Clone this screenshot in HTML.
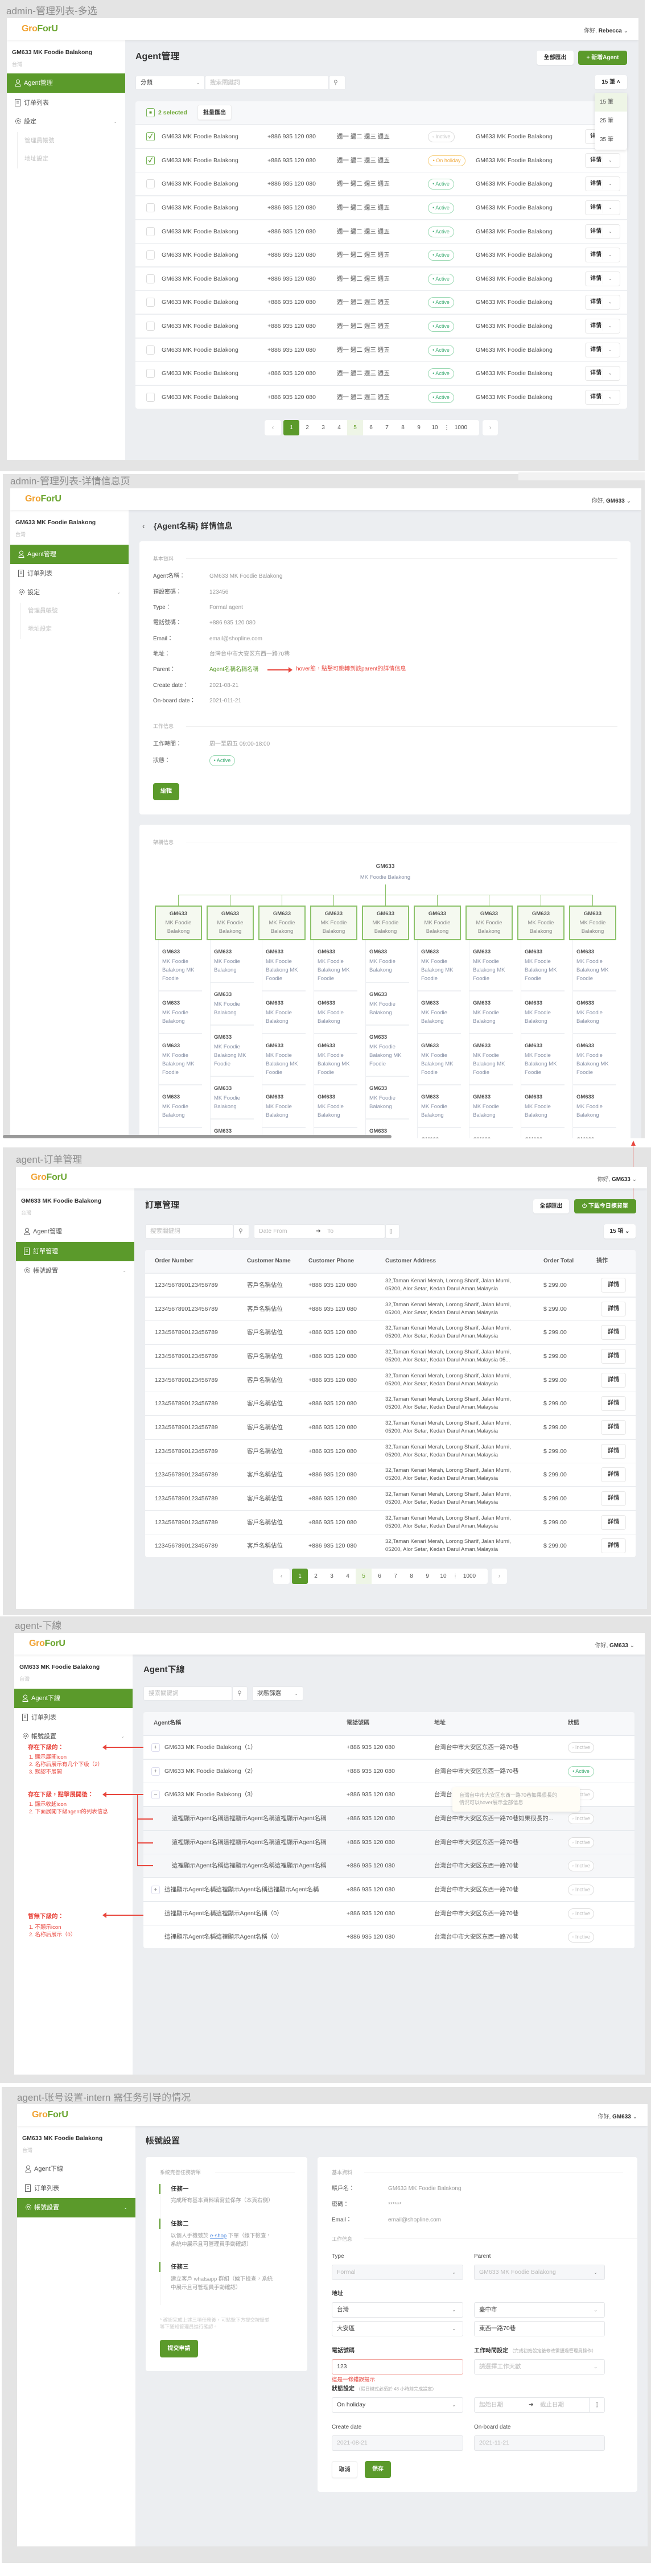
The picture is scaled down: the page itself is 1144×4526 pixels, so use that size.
<!DOCTYPE html>
<html><head><meta charset="utf-8">
<style>
*{margin:0;padding:0;box-sizing:border-box}
body{width:1144px;height:4526px;position:relative;overflow:hidden;background:#fff;font-family:"Liberation Sans","Noto Sans CJK TC","Noto Sans CJK SC",sans-serif;font-size:10.5px;color:#555}
.a{position:absolute}
.t{position:absolute;white-space:nowrap;line-height:14px}
.sec{position:absolute;background:#e4e4e4}
.lbl{position:absolute;font-size:17px;color:#8d8d8d;line-height:20px;white-space:nowrap}
.frame{position:absolute;background:#eceef1;overflow:hidden}
.hdr{position:absolute;left:0;top:0;right:0;height:38px;background:#fff;box-shadow:0 2px 4px rgba(0,0,0,.06);z-index:2}
.logo{position:absolute;left:26px;top:10px;font-size:16px;font-weight:bold;letter-spacing:-.3px}
.logo .g{color:#f1a232}.logo .f{color:#6aa52f}
.hi{position:absolute;right:18px;top:13px;font-size:10px;color:#666}
.hi b{color:#333}
.side{position:absolute;left:0;top:38px;width:208px;bottom:0;background:#fff}
.sname{position:absolute;left:9px;top:16px;font-weight:bold;color:#333;font-size:10.5px;white-space:nowrap}
.sub{position:absolute;left:9px;top:36px;font-size:9px;color:#c4c4c4}
.menu{position:absolute;left:0;width:208px;height:34px;line-height:34px;padding-left:30px;font-size:11px;color:#555}
.menu.on{background:#5b9a2b;color:#fff}
.menu svg{position:absolute;left:14px;top:10px}
.chev{position:absolute;right:14px;font-size:8px;color:#aaa}
.card{position:absolute;background:#fff;border-radius:4px}
.btn{position:absolute;background:#fff;border-radius:4px;font-size:10px;font-weight:bold;color:#333;text-align:center;box-shadow:0 1px 2px rgba(0,0,0,.06)}
.gbtn{position:absolute;background:#5b9a2b;border-radius:4px;color:#fff;font-size:10px;font-weight:bold;text-align:center}
.inp{position:absolute;background:#fff;border:1px solid #e6e8eb;border-radius:3px;font-size:10.5px;color:#bbb;padding-left:8px}
.row{position:absolute;background:#fff;height:40px}
.cb{position:absolute;left:19px;top:12px;width:15px;height:16px;border:1px solid #dcdcdc;border-radius:3px;background:#fff}
.cb.on{border-color:#7ab55c;color:#5b9a2b;font-size:11px;line-height:14px;text-align:center;font-weight:bold}
.pill{position:absolute;height:19px;line-height:17px;border-radius:10px;font-size:9px;text-align:center;border:1px solid #ddd;color:#bbb;background:#fff}
.pill.ac{border-color:#9ad9b3;color:#45b079}
.pill.ho{border-color:#f7cf7e;color:#f0a83a}
.det{position:absolute;width:62px;height:26px;border:1px solid #e8e8e8;border-radius:4px;background:#fff;font-weight:bold;color:#333;font-size:10px;line-height:24px;padding-left:8px}
.det i{position:absolute;left:30px;top:3px;bottom:3px;border-left:1px solid #eee}
.det s{position:absolute;left:40px;text-decoration:none;font-weight:normal;color:#888;font-size:8px}
.pg{position:absolute;height:27px;background:#fff;border-radius:4px;font-size:10px;color:#555;line-height:27px}
.pg span{display:inline-block;width:28px;text-align:center}
.pg .on{background:#5b9a2b;color:#fff;border-radius:3px}
.pg .h{background:#eef5e6;color:#6aa52f}
.sec2l{position:absolute;font-size:9px;color:#aaa}
.line{position:absolute;height:1px;background:#f0f0f0}
.fl{position:absolute;font-size:10px;color:#555;white-space:nowrap;line-height:14px}
.fv{position:absolute;font-size:10px;color:#999;white-space:nowrap;line-height:14px}
.box{position:absolute;width:83px;height:61px;border:2px solid #8cc26a;background:#f5f9f0;text-align:center;font-size:9.5px;color:#888;line-height:15px;padding-top:4px}
.box b{color:#555;display:block;line-height:17px}
.col{position:absolute;width:77px;border-left:1px solid #eef0f3}
.it{padding:12px 0 13px 6px;border-bottom:2px solid #eef0f3;font-size:9.5px;color:#8a93a8;line-height:15px}
.it b{display:block;color:#555;line-height:18px}
.th{position:absolute;font-weight:bold;color:#555;font-size:10px;white-space:nowrap;line-height:14px}
.red{color:#e8453c}
.fi{position:absolute;height:27px;border:1px solid #e3e5e8;border-radius:3px;background:#fff;font-size:10.5px;line-height:25px;padding-left:8px;color:#444}
.fi.d{background:#f6f7f9;color:#bbb}
.fi .c{position:absolute;right:12px;top:0;font-size:8px;color:#888}
</style></head><body>

<!-- ============ SECTION 1 ============ -->
<div class="sec" style="left:0;top:0;width:1133px;height:828px"></div>
<div class="lbl" style="left:11px;top:10px">admin-管理列表-多选</div>
<div class="frame" style="left:12px;top:32px;width:1110px;height:776px">
  <div class="hdr"><div class="logo"><span class="g">Gro</span><span class="f">ForU</span></div><div class="hi">你好, <b>Rebecca</b> ⌄</div></div>
  <div class="side">
    <div class="sname">GM633 MK Foodie Balakong</div><div class="sub">台灣</div>
    <div class="menu on" style="top:59px"><svg width="11" height="13" viewBox="0 0 11 13"><circle cx="5.5" cy="4" r="3" fill="none" stroke="#fff"/><path d="M1 12.5c0-3 2-4.5 4.5-4.5s4.5 1.5 4.5 4.5z" fill="none" stroke="#fff"/></svg>Agent管理</div>
    <div class="menu" style="top:94px"><svg width="10" height="13" viewBox="0 0 10 13"><rect x=".5" y=".5" width="9" height="12" fill="none" stroke="#666"/><path d="M3 4h4M3 7h4" stroke="#666"/></svg>订单列表</div>
    <div class="menu" style="top:127px"><svg width="12" height="12" viewBox="0 0 12 12"><circle cx="6" cy="6" r="4.5" fill="none" stroke="#666" stroke-dasharray="2 1"/><circle cx="6" cy="6" r="1.8" fill="none" stroke="#666"/></svg>設定<span class="chev">⌄</span></div>
    <div class="a" style="left:18px;top:162px;width:1px;height:64px;background:#eee"></div>
    <div class="t" style="left:31px;top:170px;color:#c4c4c4">管理員帳號</div>
    <div class="t" style="left:31px;top:202px;color:#c4c4c4">地址設定</div>
  </div>
</div>
<div class="t" style="left:238px;top:90px;font-size:16px;font-weight:bold;color:#333;line-height:20px">Agent管理</div>
<div class="btn" style="left:943px;top:89px;width:65px;height:25px;line-height:25px">全部匯出</div>
<div class="gbtn" style="left:1016px;top:89px;width:86px;height:25px;line-height:25px">+ 新增Agent</div>
<div class="inp" style="left:238px;top:133px;width:122px;height:25px;line-height:23px;color:#444">分類<span style="position:absolute;right:8px;font-size:8px;color:#888">⌄</span></div>
<div class="inp" style="left:360px;top:133px;width:218px;height:25px;line-height:23px">搜索關鍵詞</div>
<div class="inp" style="left:578px;top:133px;width:29px;height:25px;line-height:23px;color:#888;padding-left:7px">⚲</div>
<div class="btn" style="left:1045px;top:132px;width:57px;height:25px;line-height:25px">15 筆 ˄</div>
<!-- table -->
<div class="card" style="left:238px;top:178px;width:864px;height:542px;background:#eceef1"></div>
<div class="row" style="left:238px;top:178px;width:864px;height:40px;background:#f7f8fa;border-radius:4px 4px 0 0">
  <div class="cb on" style="top:12px;font-size:8px">■</div>
  <div class="t" style="left:40px;top:13px;color:#6aa52f;font-weight:bold">2 selected</div>
  <div class="btn" style="left:109px;top:6px;width:60px;height:27px;line-height:27px;border:1px solid #eee">批量匯出</div>
</div>
<div class="row" style="left:238px;top:220px;width:864px"><div class="cb on">✓</div><div class="t" style="left:46px;top:13px">GM633 MK Foodie Balakong</div><div class="t" style="left:232px;top:13px">+886 935 120 080</div><div class="t" style="left:354px;top:13px">週一 週二 週三 週五</div><div class="pill" style="left:514px;top:11px;width:47px">◦ Inctive</div><div class="t" style="left:598px;top:13px">GM633 MK Foodie Balakong</div><div class="det" style="left:790px;top:7px">详情<i></i><s>⌄</s></div></div>
<div class="row" style="left:238px;top:262px;width:864px"><div class="cb on">✓</div><div class="t" style="left:46px;top:13px">GM633 MK Foodie Balakong</div><div class="t" style="left:232px;top:13px">+886 935 120 080</div><div class="t" style="left:354px;top:13px">週一 週二 週三 週五</div><div class="pill ho" style="left:514px;top:11px;width:66px">• On holiday</div><div class="t" style="left:598px;top:13px">GM633 MK Foodie Balakong</div><div class="det" style="left:790px;top:7px">详情<i></i><s>⌄</s></div></div>
<div class="row" style="left:238px;top:303px;width:864px"><div class="cb"></div><div class="t" style="left:46px;top:13px">GM633 MK Foodie Balakong</div><div class="t" style="left:232px;top:13px">+886 935 120 080</div><div class="t" style="left:354px;top:13px">週一 週二 週三 週五</div><div class="pill ac" style="left:514px;top:11px;width:46px">• Active</div><div class="t" style="left:598px;top:13px">GM633 MK Foodie Balakong</div><div class="det" style="left:790px;top:7px">详情<i></i><s>⌄</s></div></div>
<div class="row" style="left:238px;top:345px;width:864px"><div class="cb"></div><div class="t" style="left:46px;top:13px">GM633 MK Foodie Balakong</div><div class="t" style="left:232px;top:13px">+886 935 120 080</div><div class="t" style="left:354px;top:13px">週一 週二 週三 週五</div><div class="pill ac" style="left:514px;top:11px;width:46px">• Active</div><div class="t" style="left:598px;top:13px">GM633 MK Foodie Balakong</div><div class="det" style="left:790px;top:7px">详情<i></i><s>⌄</s></div></div>
<div class="row" style="left:238px;top:387px;width:864px"><div class="cb"></div><div class="t" style="left:46px;top:13px">GM633 MK Foodie Balakong</div><div class="t" style="left:232px;top:13px">+886 935 120 080</div><div class="t" style="left:354px;top:13px">週一 週二 週三 週五</div><div class="pill ac" style="left:514px;top:11px;width:46px">• Active</div><div class="t" style="left:598px;top:13px">GM633 MK Foodie Balakong</div><div class="det" style="left:790px;top:7px">详情<i></i><s>⌄</s></div></div>
<div class="row" style="left:238px;top:428px;width:864px"><div class="cb"></div><div class="t" style="left:46px;top:13px">GM633 MK Foodie Balakong</div><div class="t" style="left:232px;top:13px">+886 935 120 080</div><div class="t" style="left:354px;top:13px">週一 週二 週三 週五</div><div class="pill ac" style="left:514px;top:11px;width:46px">• Active</div><div class="t" style="left:598px;top:13px">GM633 MK Foodie Balakong</div><div class="det" style="left:790px;top:7px">详情<i></i><s>⌄</s></div></div>
<div class="row" style="left:238px;top:470px;width:864px"><div class="cb"></div><div class="t" style="left:46px;top:13px">GM633 MK Foodie Balakong</div><div class="t" style="left:232px;top:13px">+886 935 120 080</div><div class="t" style="left:354px;top:13px">週一 週二 週三 週五</div><div class="pill ac" style="left:514px;top:11px;width:46px">• Active</div><div class="t" style="left:598px;top:13px">GM633 MK Foodie Balakong</div><div class="det" style="left:790px;top:7px">详情<i></i><s>⌄</s></div></div>
<div class="row" style="left:238px;top:511px;width:864px"><div class="cb"></div><div class="t" style="left:46px;top:13px">GM633 MK Foodie Balakong</div><div class="t" style="left:232px;top:13px">+886 935 120 080</div><div class="t" style="left:354px;top:13px">週一 週二 週三 週五</div><div class="pill ac" style="left:514px;top:11px;width:46px">• Active</div><div class="t" style="left:598px;top:13px">GM633 MK Foodie Balakong</div><div class="det" style="left:790px;top:7px">详情<i></i><s>⌄</s></div></div>
<div class="row" style="left:238px;top:553px;width:864px"><div class="cb"></div><div class="t" style="left:46px;top:13px">GM633 MK Foodie Balakong</div><div class="t" style="left:232px;top:13px">+886 935 120 080</div><div class="t" style="left:354px;top:13px">週一 週二 週三 週五</div><div class="pill ac" style="left:514px;top:11px;width:46px">• Active</div><div class="t" style="left:598px;top:13px">GM633 MK Foodie Balakong</div><div class="det" style="left:790px;top:7px">详情<i></i><s>⌄</s></div></div>
<div class="row" style="left:238px;top:595px;width:864px"><div class="cb"></div><div class="t" style="left:46px;top:13px">GM633 MK Foodie Balakong</div><div class="t" style="left:232px;top:13px">+886 935 120 080</div><div class="t" style="left:354px;top:13px">週一 週二 週三 週五</div><div class="pill ac" style="left:514px;top:11px;width:46px">• Active</div><div class="t" style="left:598px;top:13px">GM633 MK Foodie Balakong</div><div class="det" style="left:790px;top:7px">详情<i></i><s>⌄</s></div></div>
<div class="row" style="left:238px;top:636px;width:864px"><div class="cb"></div><div class="t" style="left:46px;top:13px">GM633 MK Foodie Balakong</div><div class="t" style="left:232px;top:13px">+886 935 120 080</div><div class="t" style="left:354px;top:13px">週一 週二 週三 週五</div><div class="pill ac" style="left:514px;top:11px;width:46px">• Active</div><div class="t" style="left:598px;top:13px">GM633 MK Foodie Balakong</div><div class="det" style="left:790px;top:7px">详情<i></i><s>⌄</s></div></div>
<div class="row" style="left:238px;top:678px;width:864px;border-radius:0 0 4px 4px"><div class="cb"></div><div class="t" style="left:46px;top:13px">GM633 MK Foodie Balakong</div><div class="t" style="left:232px;top:13px">+886 935 120 080</div><div class="t" style="left:354px;top:13px">週一 週二 週三 週五</div><div class="pill ac" style="left:514px;top:11px;width:46px">• Active</div><div class="t" style="left:598px;top:13px">GM633 MK Foodie Balakong</div><div class="det" style="left:790px;top:7px">详情<i></i><s>⌄</s></div></div>
<!-- dropdown -->
<div class="card" style="left:1045px;top:163px;width:57px;height:100px;box-shadow:0 2px 6px rgba(0,0,0,.12);font-size:10px;color:#555">
  <div style="height:33px;line-height:33px;padding-left:9px;background:#eef5e6">15 筆</div>
  <div style="height:33px;line-height:33px;padding-left:9px">25 筆</div>
  <div style="height:33px;line-height:33px;padding-left:9px">35 筆</div>
</div>
<div class="pg" style="left:465px;top:738px;width:29px;text-align:center;color:#999">‹</div>
<div class="pg" style="left:498px;top:738px;width:344px"><span class="on">1</span><span>2</span><span>3</span><span>4</span><span class="h">5</span><span>6</span><span>7</span><span>8</span><span>9</span><span>10</span><span style="width:14px">⋮</span><span style="width:36px">1000</span></div>
<div class="pg" style="left:848px;top:738px;width:27px;text-align:center;color:#999">›</div>

<!-- ============ SECTION 2 ============ -->
<div class="sec" style="left:5px;top:833px;width:1128px;height:1167px"></div>
<div class="a" style="left:911px;top:830px;width:222px;height:14px;background:#f2f2f2"></div>
<div class="lbl" style="left:18px;top:836px">admin-管理列表-详情信息页</div>
<div class="frame" style="left:18px;top:858px;width:1109px;height:1142px">
  <div class="hdr"><div class="logo"><span class="g">Gro</span><span class="f">ForU</span></div><div class="hi">你好, <b>GM633</b> ⌄</div></div>
  <div class="side">
    <div class="sname">GM633 MK Foodie Balakong</div><div class="sub">台灣</div>
    <div class="menu on" style="top:61px"><svg width="11" height="13" viewBox="0 0 11 13"><circle cx="5.5" cy="4" r="3" fill="none" stroke="#fff"/><path d="M1 12.5c0-3 2-4.5 4.5-4.5s4.5 1.5 4.5 4.5z" fill="none" stroke="#fff"/></svg>Agent管理</div>
    <div class="menu" style="top:95px"><svg width="10" height="13" viewBox="0 0 10 13"><rect x=".5" y=".5" width="9" height="12" fill="none" stroke="#666"/><path d="M3 4h4M3 7h4" stroke="#666"/></svg>订单列表</div>
    <div class="menu" style="top:128px"><svg width="12" height="12" viewBox="0 0 12 12"><circle cx="6" cy="6" r="4.5" fill="none" stroke="#666" stroke-dasharray="2 1"/><circle cx="6" cy="6" r="1.8" fill="none" stroke="#666"/></svg>設定<span class="chev">⌄</span></div>
    <div class="a" style="left:18px;top:163px;width:1px;height:64px;background:#eee"></div>
    <div class="t" style="left:31px;top:170px;color:#c4c4c4">管理員帳號</div>
    <div class="t" style="left:31px;top:202px;color:#c4c4c4">地址設定</div>
  </div>
  <!-- tree card -->
  <div class="card" style="left:227px;top:591px;width:863px;height:600px;overflow:hidden">
    <div class="sec2l" style="left:24px;top:24px">架構信息</div><div class="line" style="left:82px;top:30px;width:758px"></div>
    <div class="t" style="left:382px;top:67px;width:100px;text-align:center;font-weight:bold;color:#555;font-size:10px">GM633</div>
    <div class="t" style="left:382px;top:86px;width:100px;text-align:center;color:#8a93a8;font-size:9.5px">MK Foodie Balakong</div>
    <div class="a" style="left:432px;top:105px;width:1px;height:18px;background:#8cc26a"></div>
    <div class="a" style="left:68px;top:123px;width:729px;height:1px;background:#8cc26a"></div>
    <div class="a" style="left:68px;top:123px;width:1px;height:19px;background:#8cc26a"></div>
    <div class="a" style="left:159px;top:123px;width:1px;height:19px;background:#8cc26a"></div>
    <div class="a" style="left:250px;top:123px;width:1px;height:19px;background:#8cc26a"></div>
    <div class="a" style="left:341px;top:123px;width:1px;height:19px;background:#8cc26a"></div>
    <div class="a" style="left:432px;top:123px;width:1px;height:19px;background:#8cc26a"></div>
    <div class="a" style="left:523px;top:123px;width:1px;height:19px;background:#8cc26a"></div>
    <div class="a" style="left:614px;top:123px;width:1px;height:19px;background:#8cc26a"></div>
    <div class="a" style="left:705px;top:123px;width:1px;height:19px;background:#8cc26a"></div>
    <div class="a" style="left:796px;top:123px;width:1px;height:19px;background:#8cc26a"></div>
    <div class="box" style="left:27px;top:142px"><b>GM633</b>MK Foodie<br>Balakong</div>
    <div class="box" style="left:118px;top:142px"><b>GM633</b>MK Foodie<br>Balakong</div>
    <div class="box" style="left:209px;top:142px"><b>GM633</b>MK Foodie<br>Balakong</div>
    <div class="box" style="left:300px;top:142px"><b>GM633</b>MK Foodie<br>Balakong</div>
    <div class="box" style="left:391px;top:142px"><b>GM633</b>MK Foodie<br>Balakong</div>
    <div class="box" style="left:482px;top:142px"><b>GM633</b>MK Foodie<br>Balakong</div>
    <div class="box" style="left:573px;top:142px"><b>GM633</b>MK Foodie<br>Balakong</div>
    <div class="box" style="left:664px;top:142px"><b>GM633</b>MK Foodie<br>Balakong</div>
    <div class="box" style="left:755px;top:142px"><b>GM633</b>MK Foodie<br>Balakong</div>
    <div class="col" style="left:33px;top:203px"><div class="it"><b>GM633</b>MK Foodie<br>Balakong MK<br>Foodie</div><div class="it"><b>GM633</b>MK Foodie<br>Balakong</div><div class="it"><b>GM633</b>MK Foodie<br>Balakong MK<br>Foodie</div><div class="it"><b>GM633</b>MK Foodie<br>Balakong</div><div class="it"><b>GM633</b>MK Foodie<br>Balakong</div></div>
    <div class="col" style="left:124px;top:203px"><div class="it"><b>GM633</b>MK Foodie<br>Balakong</div><div class="it"><b>GM633</b>MK Foodie<br>Balakong</div><div class="it"><b>GM633</b>MK Foodie<br>Balakong MK<br>Foodie</div><div class="it"><b>GM633</b>MK Foodie<br>Balakong</div><div class="it"><b>GM633</b>MK Foodie<br>Balakong</div></div>
    <div class="col" style="left:215px;top:203px"><div class="it"><b>GM633</b>MK Foodie<br>Balakong MK<br>Foodie</div><div class="it"><b>GM633</b>MK Foodie<br>Balakong</div><div class="it"><b>GM633</b>MK Foodie<br>Balakong MK<br>Foodie</div><div class="it"><b>GM633</b>MK Foodie<br>Balakong</div><div class="it"><b>GM633</b>MK Foodie<br>Balakong</div></div>
    <div class="col" style="left:306px;top:203px"><div class="it"><b>GM633</b>MK Foodie<br>Balakong MK<br>Foodie</div><div class="it"><b>GM633</b>MK Foodie<br>Balakong</div><div class="it"><b>GM633</b>MK Foodie<br>Balakong MK<br>Foodie</div><div class="it"><b>GM633</b>MK Foodie<br>Balakong</div><div class="it"><b>GM633</b>MK Foodie<br>Balakong</div></div>
    <div class="col" style="left:397px;top:203px"><div class="it"><b>GM633</b>MK Foodie<br>Balakong</div><div class="it"><b>GM633</b>MK Foodie<br>Balakong</div><div class="it"><b>GM633</b>MK Foodie<br>Balakong MK<br>Foodie</div><div class="it"><b>GM633</b>MK Foodie<br>Balakong</div><div class="it"><b>GM633</b>MK Foodie<br>Balakong</div></div>
    <div class="col" style="left:488px;top:203px"><div class="it"><b>GM633</b>MK Foodie<br>Balakong MK<br>Foodie</div><div class="it"><b>GM633</b>MK Foodie<br>Balakong</div><div class="it"><b>GM633</b>MK Foodie<br>Balakong MK<br>Foodie</div><div class="it"><b>GM633</b>MK Foodie<br>Balakong</div><div class="it"><b>GM633</b>MK Foodie<br>Balakong</div></div>
    <div class="col" style="left:579px;top:203px"><div class="it"><b>GM633</b>MK Foodie<br>Balakong MK<br>Foodie</div><div class="it"><b>GM633</b>MK Foodie<br>Balakong</div><div class="it"><b>GM633</b>MK Foodie<br>Balakong MK<br>Foodie</div><div class="it"><b>GM633</b>MK Foodie<br>Balakong</div><div class="it"><b>GM633</b>MK Foodie<br>Balakong</div></div>
    <div class="col" style="left:670px;top:203px"><div class="it"><b>GM633</b>MK Foodie<br>Balakong MK<br>Foodie</div><div class="it"><b>GM633</b>MK Foodie<br>Balakong</div><div class="it"><b>GM633</b>MK Foodie<br>Balakong MK<br>Foodie</div><div class="it"><b>GM633</b>MK Foodie<br>Balakong</div><div class="it"><b>GM633</b>MK Foodie<br>Balakong</div></div>
    <div class="col" style="left:761px;top:203px"><div class="it"><b>GM633</b>MK Foodie<br>Balakong MK<br>Foodie</div><div class="it"><b>GM633</b>MK Foodie<br>Balakong</div><div class="it"><b>GM633</b>MK Foodie<br>Balakong MK<br>Foodie</div><div class="it"><b>GM633</b>MK Foodie<br>Balakong</div><div class="it"><b>GM633</b>MK Foodie<br>Balakong</div></div>
  </div>
</div>
<div class="t" style="left:250px;top:914px;font-size:14px;color:#555;line-height:20px">‹</div>
<div class="t" style="left:270px;top:914px;font-size:14px;font-weight:bold;color:#333;line-height:20px">{Agent名稱} 詳情信息</div>
<div class="card" style="left:245px;top:951px;width:863px;height:480px">
  <div class="sec2l" style="left:24px;top:24px">基本資料</div><div class="line" style="left:82px;top:30px;width:758px"></div>
  <div class="fl" style="left:24px;top:55px">Agent名稱：</div><div class="fv" style="left:123px;top:55px">GM633 MK Foodie Balakong</div>
  <div class="fl" style="left:24px;top:83px">預設密碼：</div><div class="fv" style="left:123px;top:83px">123456</div>
  <div class="fl" style="left:24px;top:110px">Type：</div><div class="fv" style="left:123px;top:110px">Formal agent</div>
  <div class="fl" style="left:24px;top:137px">電話號碼：</div><div class="fv" style="left:123px;top:137px">+886 935 120 080</div>
  <div class="fl" style="left:24px;top:165px">Email：</div><div class="fv" style="left:123px;top:165px">email@shopline.com</div>
  <div class="fl" style="left:24px;top:192px">地址：</div><div class="fv" style="left:123px;top:192px">台灣台中市大安区东西一路70巷</div>
  <div class="fl" style="left:24px;top:219px">Parent：</div><div class="fv" style="left:123px;top:219px;color:#5b9a2b">Agent名稱名稱名稱</div>
  <div class="a" style="left:225px;top:225px;width:38px;height:2px;background:#e8453c"></div>
  <div class="a" style="left:262px;top:221px;width:0;height:0;border-left:7px solid #e8453c;border-top:5px solid transparent;border-bottom:5px solid transparent"></div>
  <div class="fv red" style="left:275px;top:218px">hover態，點擊可跳轉到該parent的詳情信息</div>
  <div class="fl" style="left:24px;top:247px">Create date：</div><div class="fv" style="left:123px;top:247px">2021-08-21</div>
  <div class="fl" style="left:24px;top:274px">On-board date：</div><div class="fv" style="left:123px;top:274px">2021-011-21</div>
  <div class="sec2l" style="left:24px;top:318px">工作信息</div><div class="line" style="left:82px;top:325px;width:758px"></div>
  <div class="fl" style="left:24px;top:350px">工作時間：</div><div class="fv" style="left:123px;top:350px">周一至周五 09:00-18:00</div>
  <div class="fl" style="left:24px;top:379px">狀態：</div><div class="pill ac" style="left:123px;top:376px;width:45px">• Active</div>
  <div class="gbtn" style="left:24px;top:425px;width:46px;height:30px;line-height:30px">編輯</div>
</div>
<div class="a" style="left:5px;top:1994px;width:683px;height:6px;background:#9a9a9a;border-radius:3px"></div>

<!-- ============ SECTION 3 ============ -->
<div class="sec" style="left:5px;top:2016px;width:1143px;height:822px"></div>
<div class="lbl" style="left:28px;top:2028px">agent-订单管理</div>
<div class="frame" style="left:28px;top:2050px;width:1109px;height:777px">
  <div class="hdr"><div class="logo"><span class="g">Gro</span><span class="f">ForU</span></div><div class="hi">你好, <b>GM633</b> ⌄</div></div>
  <div class="side">
    <div class="sname">GM633 MK Foodie Balakong</div><div class="sub">台灣</div>
    <div class="menu" style="top:59px"><svg width="11" height="13" viewBox="0 0 11 13"><circle cx="5.5" cy="4" r="3" fill="none" stroke="#666"/><path d="M1 12.5c0-3 2-4.5 4.5-4.5s4.5 1.5 4.5 4.5z" fill="none" stroke="#666"/></svg>Agent管理</div>
    <div class="menu on" style="top:94px"><svg width="10" height="13" viewBox="0 0 10 13"><rect x=".5" y=".5" width="9" height="12" fill="none" stroke="#fff"/><path d="M3 4h4M3 7h4" stroke="#fff"/></svg>訂單管理</div>
    <div class="menu" style="top:128px"><svg width="12" height="12" viewBox="0 0 12 12"><circle cx="6" cy="6" r="4.5" fill="none" stroke="#666" stroke-dasharray="2 1"/><circle cx="6" cy="6" r="1.8" fill="none" stroke="#666"/></svg>帳號設置<span class="chev">⌄</span></div>
  </div>
</div>
<div class="a" style="left:1112px;top:2012px;width:1px;height:105px;background:#e8453c"></div>
<div class="a" style="left:1109px;top:2004px;width:0;height:0;border-bottom:9px solid #e8453c;border-left:4px solid transparent;border-right:4px solid transparent"></div>
<div class="t" style="left:255px;top:2108px;font-size:15px;font-weight:bold;color:#333;line-height:20px">訂單管理</div>
<div class="btn" style="left:937px;top:2107px;width:63px;height:25px;line-height:25px">全部匯出</div>
<div class="gbtn" style="left:1009px;top:2107px;width:109px;height:25px;line-height:25px">⏻ 下載今日揀貨單</div>
<div class="inp" style="left:255px;top:2151px;width:155px;height:25px;line-height:23px">搜索關鍵詞</div>
<div class="inp" style="left:410px;top:2151px;width:28px;height:25px;line-height:23px;color:#888">⚲</div>
<div class="inp" style="left:446px;top:2151px;width:231px;height:25px;line-height:23px">Date From<span style="position:absolute;left:108px;color:#555">➜</span><span style="position:absolute;left:128px">To</span></div>
<div class="inp" style="left:677px;top:2151px;width:25px;height:25px;line-height:23px;color:#888;padding-left:6px">▯</div>
<div class="btn" style="left:1061px;top:2151px;width:56px;height:25px;line-height:25px">15 項 ⌄</div>
<div class="card" style="left:255px;top:2196px;width:862px;height:541px;background:#eceef1"></div>
<div class="row" style="left:255px;top:2196px;width:862px;background:#f7f8fa;border-radius:4px 4px 0 0">
  <div class="th" style="left:17px;top:13px">Order Number</div><div class="th" style="left:179px;top:13px">Customer Name</div><div class="th" style="left:287px;top:13px">Customer Phone</div><div class="th" style="left:422px;top:13px">Customer Address</div><div class="th" style="left:700px;top:13px">Order Total</div><div class="th" style="left:793px;top:13px">操作</div>
</div>
<div class="row" style="left:255px;top:2238px;width:862px"><div class="t" style="left:17px;top:13px">1234567890123456789</div><div class="t" style="left:179px;top:13px">客戶名稱佔位</div><div class="t" style="left:287px;top:13px">+886 935 120 080</div><div class="t" style="left:422px;top:6px;font-size:9.5px">32,Taman Kenari Merah, Lorong Sharif, Jalan Murni,<br>05200, Alor Setar, Kedah Darul Aman,Malaysia</div><div class="t" style="left:700px;top:13px">$ 299.00</div><div class="det" style="left:801px;top:7px;width:44px;padding:0;text-align:center">詳情</div></div>
<div class="row" style="left:255px;top:2280px;width:862px"><div class="t" style="left:17px;top:13px">1234567890123456789</div><div class="t" style="left:179px;top:13px">客戶名稱佔位</div><div class="t" style="left:287px;top:13px">+886 935 120 080</div><div class="t" style="left:422px;top:6px;font-size:9.5px">32,Taman Kenari Merah, Lorong Sharif, Jalan Murni,<br>05200, Alor Setar, Kedah Darul Aman,Malaysia</div><div class="t" style="left:700px;top:13px">$ 299.00</div><div class="det" style="left:801px;top:7px;width:44px;padding:0;text-align:center">詳情</div></div>
<div class="row" style="left:255px;top:2321px;width:862px"><div class="t" style="left:17px;top:13px">1234567890123456789</div><div class="t" style="left:179px;top:13px">客戶名稱佔位</div><div class="t" style="left:287px;top:13px">+886 935 120 080</div><div class="t" style="left:422px;top:6px;font-size:9.5px">32,Taman Kenari Merah, Lorong Sharif, Jalan Murni,<br>05200, Alor Setar, Kedah Darul Aman,Malaysia</div><div class="t" style="left:700px;top:13px">$ 299.00</div><div class="det" style="left:801px;top:7px;width:44px;padding:0;text-align:center">詳情</div></div>
<div class="row" style="left:255px;top:2363px;width:862px"><div class="t" style="left:17px;top:13px">1234567890123456789</div><div class="t" style="left:179px;top:13px">客戶名稱佔位</div><div class="t" style="left:287px;top:13px">+886 935 120 080</div><div class="t" style="left:422px;top:6px;font-size:9.5px">32,Taman Kenari Merah, Lorong Sharif, Jalan Murni,<br>05200, Alor Setar, Kedah Darul Aman,Malaysia 05...</div><div class="t" style="left:700px;top:13px">$ 299.00</div><div class="det" style="left:801px;top:7px;width:44px;padding:0;text-align:center">詳情</div></div>
<div class="row" style="left:255px;top:2405px;width:862px"><div class="t" style="left:17px;top:13px">1234567890123456789</div><div class="t" style="left:179px;top:13px">客戶名稱佔位</div><div class="t" style="left:287px;top:13px">+886 935 120 080</div><div class="t" style="left:422px;top:6px;font-size:9.5px">32,Taman Kenari Merah, Lorong Sharif, Jalan Murni,<br>05200, Alor Setar, Kedah Darul Aman,Malaysia</div><div class="t" style="left:700px;top:13px">$ 299.00</div><div class="det" style="left:801px;top:7px;width:44px;padding:0;text-align:center">詳情</div></div>
<div class="row" style="left:255px;top:2446px;width:862px"><div class="t" style="left:17px;top:13px">1234567890123456789</div><div class="t" style="left:179px;top:13px">客戶名稱佔位</div><div class="t" style="left:287px;top:13px">+886 935 120 080</div><div class="t" style="left:422px;top:6px;font-size:9.5px">32,Taman Kenari Merah, Lorong Sharif, Jalan Murni,<br>05200, Alor Setar, Kedah Darul Aman,Malaysia</div><div class="t" style="left:700px;top:13px">$ 299.00</div><div class="det" style="left:801px;top:7px;width:44px;padding:0;text-align:center">詳情</div></div>
<div class="row" style="left:255px;top:2488px;width:862px"><div class="t" style="left:17px;top:13px">1234567890123456789</div><div class="t" style="left:179px;top:13px">客戶名稱佔位</div><div class="t" style="left:287px;top:13px">+886 935 120 080</div><div class="t" style="left:422px;top:6px;font-size:9.5px">32,Taman Kenari Merah, Lorong Sharif, Jalan Murni,<br>05200, Alor Setar, Kedah Darul Aman,Malaysia</div><div class="t" style="left:700px;top:13px">$ 299.00</div><div class="det" style="left:801px;top:7px;width:44px;padding:0;text-align:center">詳情</div></div>
<div class="row" style="left:255px;top:2530px;width:862px"><div class="t" style="left:17px;top:13px">1234567890123456789</div><div class="t" style="left:179px;top:13px">客戶名稱佔位</div><div class="t" style="left:287px;top:13px">+886 935 120 080</div><div class="t" style="left:422px;top:6px;font-size:9.5px">32,Taman Kenari Merah, Lorong Sharif, Jalan Murni,<br>05200, Alor Setar, Kedah Darul Aman,Malaysia</div><div class="t" style="left:700px;top:13px">$ 299.00</div><div class="det" style="left:801px;top:7px;width:44px;padding:0;text-align:center">詳情</div></div>
<div class="row" style="left:255px;top:2571px;width:862px"><div class="t" style="left:17px;top:13px">1234567890123456789</div><div class="t" style="left:179px;top:13px">客戶名稱佔位</div><div class="t" style="left:287px;top:13px">+886 935 120 080</div><div class="t" style="left:422px;top:6px;font-size:9.5px">32,Taman Kenari Merah, Lorong Sharif, Jalan Murni,<br>05200, Alor Setar, Kedah Darul Aman,Malaysia</div><div class="t" style="left:700px;top:13px">$ 299.00</div><div class="det" style="left:801px;top:7px;width:44px;padding:0;text-align:center">詳情</div></div>
<div class="row" style="left:255px;top:2613px;width:862px"><div class="t" style="left:17px;top:13px">1234567890123456789</div><div class="t" style="left:179px;top:13px">客戶名稱佔位</div><div class="t" style="left:287px;top:13px">+886 935 120 080</div><div class="t" style="left:422px;top:6px;font-size:9.5px">32,Taman Kenari Merah, Lorong Sharif, Jalan Murni,<br>05200, Alor Setar, Kedah Darul Aman,Malaysia</div><div class="t" style="left:700px;top:13px">$ 299.00</div><div class="det" style="left:801px;top:7px;width:44px;padding:0;text-align:center">詳情</div></div>
<div class="row" style="left:255px;top:2655px;width:862px"><div class="t" style="left:17px;top:13px">1234567890123456789</div><div class="t" style="left:179px;top:13px">客戶名稱佔位</div><div class="t" style="left:287px;top:13px">+886 935 120 080</div><div class="t" style="left:422px;top:6px;font-size:9.5px">32,Taman Kenari Merah, Lorong Sharif, Jalan Murni,<br>05200, Alor Setar, Kedah Darul Aman,Malaysia</div><div class="t" style="left:700px;top:13px">$ 299.00</div><div class="det" style="left:801px;top:7px;width:44px;padding:0;text-align:center">詳情</div></div>
<div class="row" style="left:255px;top:2696px;width:862px;border-radius:0 0 4px 4px"><div class="t" style="left:17px;top:13px">1234567890123456789</div><div class="t" style="left:179px;top:13px">客戶名稱佔位</div><div class="t" style="left:287px;top:13px">+886 935 120 080</div><div class="t" style="left:422px;top:6px;font-size:9.5px">32,Taman Kenari Merah, Lorong Sharif, Jalan Murni,<br>05200, Alor Setar, Kedah Darul Aman,Malaysia</div><div class="t" style="left:700px;top:13px">$ 299.00</div><div class="det" style="left:801px;top:7px;width:44px;padding:0;text-align:center">詳情</div></div>
<div class="pg" style="left:480px;top:2756px;width:29px;text-align:center;color:#999">‹</div>
<div class="pg" style="left:513px;top:2756px;width:344px"><span class="on">1</span><span>2</span><span>3</span><span>4</span><span class="h">5</span><span>6</span><span>7</span><span>8</span><span>9</span><span>10</span><span style="width:14px">⋮</span><span style="width:36px">1000</span></div>
<div class="pg" style="left:864px;top:2756px;width:27px;text-align:center;color:#999">›</div>

<!-- ============ SECTION 4 ============ -->
<div class="sec" style="left:0;top:2840px;width:1148px;height:820px"></div>
<div class="lbl" style="left:26px;top:2847px">agent-下線</div>
<div class="frame" style="left:25px;top:2869px;width:1108px;height:776px">
  <div class="hdr"><div class="logo"><span class="g">Gro</span><span class="f">ForU</span></div><div class="hi">你好, <b>GM633</b> ⌄</div></div>
  <div class="side">
    <div class="sname">GM633 MK Foodie Balakong</div><div class="sub">台灣</div>
    <div class="menu on" style="top:60px"><svg width="11" height="13" viewBox="0 0 11 13"><circle cx="5.5" cy="4" r="3" fill="none" stroke="#fff"/><path d="M1 12.5c0-3 2-4.5 4.5-4.5s4.5 1.5 4.5 4.5z" fill="none" stroke="#fff"/></svg>Agent下線</div>
    <div class="menu" style="top:94px"><svg width="10" height="13" viewBox="0 0 10 13"><rect x=".5" y=".5" width="9" height="12" fill="none" stroke="#666"/><path d="M3 4h4M3 7h4" stroke="#666"/></svg>订单列表</div>
    <div class="menu" style="top:127px"><svg width="12" height="12" viewBox="0 0 12 12"><circle cx="6" cy="6" r="4.5" fill="none" stroke="#666" stroke-dasharray="2 1"/><circle cx="6" cy="6" r="1.8" fill="none" stroke="#666"/></svg>帳號設置<span class="chev">⌄</span></div>
  </div>
</div>
<!-- annotations -->
<div class="t red" style="left:49px;top:3063px;font-weight:bold">存在下級的：</div>
<div class="t red" style="left:51px;top:3081px;font-size:9.5px;line-height:13px">1. 顯示展開icon<br>2. 名称后展示有几个下级（2）<br>3. 默認不展開</div>
<div class="t red" style="left:49px;top:3146px;font-weight:bold">存在下級，點擊展開後：</div>
<div class="t red" style="left:51px;top:3164px;font-size:9.5px;line-height:13px">1. 顯示收起icon<br>2. 下面展開下級agent的列表信息</div>
<div class="t red" style="left:49px;top:3360px;font-weight:bold">暫無下級的：</div>
<div class="t red" style="left:51px;top:3380px;font-size:9.5px;line-height:13px">1. 不顯示icon<br>2. 名称后展示（0）</div>
<div class="a" style="left:186px;top:3069px;width:76px;height:2px;background:#e8453c"></div>
<div class="a" style="left:180px;top:3065px;border-right:7px solid #e8453c;border-top:5px solid transparent;border-bottom:5px solid transparent"></div>
<div class="a" style="left:186px;top:3152px;width:76px;height:2px;background:#e8453c"></div>
<div class="a" style="left:180px;top:3148px;border-right:7px solid #e8453c;border-top:5px solid transparent;border-bottom:5px solid transparent"></div>
<div class="a" style="left:186px;top:3364px;width:76px;height:2px;background:#e8453c"></div>
<div class="a" style="left:180px;top:3360px;border-right:7px solid #e8453c;border-top:5px solid transparent;border-bottom:5px solid transparent"></div>
<div class="a" style="left:241px;top:3153px;width:1px;height:125px;background:#e8453c;z-index:3"></div>
<div class="a" style="left:241px;top:3195px;width:28px;height:2px;background:#e8453c;z-index:3"></div>
<div class="a" style="left:241px;top:3237px;width:28px;height:2px;background:#e8453c;z-index:3"></div>
<div class="a" style="left:241px;top:3277px;width:28px;height:2px;background:#e8453c;z-index:3"></div>
<div class="t" style="left:252px;top:2924px;font-size:15px;font-weight:bold;color:#333;line-height:20px">Agent下線</div>
<div class="inp" style="left:252px;top:2963px;width:156px;height:25px;line-height:23px">搜索關鍵詞</div>
<div class="inp" style="left:408px;top:2963px;width:27px;height:25px;line-height:23px;color:#888">⚲</div>
<div class="inp" style="left:443px;top:2963px;width:90px;height:25px;line-height:23px;color:#444">狀態篩選<span style="position:absolute;right:8px;font-size:8px;color:#888">⌄</span></div>
<div class="card" style="left:252px;top:3008px;width:863px;height:415px;background:#e8ebef"></div>
<div class="row" style="left:252px;top:3008px;width:863px;background:#f7f8fa;border-radius:4px 4px 0 0"><div class="th" style="left:18px;top:13px">Agent名稱</div><div class="th" style="left:357px;top:13px">電話號碼</div><div class="th" style="left:511px;top:13px">地址</div><div class="th" style="left:746px;top:13px">狀態</div></div>
<div class="row" style="left:252px;top:3050px;width:863px"><div class="a" style="left:14px;top:13px;width:15px;height:15px;border:1px solid #dde;border-radius:3px;text-align:center;line-height:13px;color:#888">+</div><div class="t" style="left:37px;top:13px">GM633 MK Foodie Balakong（1）</div><div class="t" style="left:357px;top:13px">+886 935 120 080</div><div class="t" style="left:511px;top:13px">台灣台中市大安区东西一路70巷</div><div class="pill" style="left:746px;top:11px;width:46px">◦ Inctive</div></div>
<div class="row" style="left:252px;top:3092px;width:863px"><div class="a" style="left:14px;top:13px;width:15px;height:15px;border:1px solid #dde;border-radius:3px;text-align:center;line-height:13px;color:#888">+</div><div class="t" style="left:37px;top:13px">GM633 MK Foodie Balakong（2）</div><div class="t" style="left:357px;top:13px">+886 935 120 080</div><div class="t" style="left:511px;top:13px">台灣台中市大安区东西一路70巷</div><div class="pill ac" style="left:746px;top:11px;width:46px">• Active</div></div>
<div class="row" style="left:252px;top:3133px;width:863px"><div class="a" style="left:14px;top:13px;width:15px;height:15px;border:1px solid #dde;border-radius:3px;text-align:center;line-height:13px;color:#888">−</div><div class="t" style="left:37px;top:13px">GM633 MK Foodie Balakong（3）</div><div class="t" style="left:357px;top:13px">+886 935 120 080</div><div class="t" style="left:511px;top:13px">台灣台</div><div class="pill" style="left:746px;top:11px;width:46px">◦ Inctive</div></div>
<div class="row" style="left:252px;top:3175px;width:863px;background:#f6f7f9"><div class="t" style="left:50px;top:13px">這裡顯示Agent名稱這裡顯示Agent名稱這裡顯示Agent名稱</div><div class="t" style="left:357px;top:13px">+886 935 120 080</div><div class="t" style="left:511px;top:13px">台灣台中市大安区东西一路70巷如果很長的...</div><div class="pill" style="left:746px;top:11px;width:46px">◦ Inctive</div></div>
<div class="row" style="left:252px;top:3217px;width:863px;background:#f6f7f9"><div class="t" style="left:50px;top:13px">這裡顯示Agent名稱這裡顯示Agent名稱這裡顯示Agent名稱</div><div class="t" style="left:357px;top:13px">+886 935 120 080</div><div class="t" style="left:511px;top:13px">台灣台中市大安区东西一路70巷</div><div class="pill" style="left:746px;top:11px;width:46px">◦ Inctive</div></div>
<div class="row" style="left:252px;top:3258px;width:863px;background:#f6f7f9"><div class="t" style="left:50px;top:13px">這裡顯示Agent名稱這裡顯示Agent名稱這裡顯示Agent名稱</div><div class="t" style="left:357px;top:13px">+886 935 120 080</div><div class="t" style="left:511px;top:13px">台灣台中市大安区东西一路70巷</div><div class="pill" style="left:746px;top:11px;width:46px">◦ Inctive</div></div>
<div class="row" style="left:252px;top:3300px;width:863px"><div class="a" style="left:14px;top:13px;width:15px;height:15px;border:1px solid #dde;border-radius:3px;text-align:center;line-height:13px;color:#888">+</div><div class="t" style="left:37px;top:13px">這裡顯示Agent名稱這裡顯示Agent名稱這裡顯示Agent名稱</div><div class="t" style="left:357px;top:13px">+886 935 120 080</div><div class="t" style="left:511px;top:13px">台灣台中市大安区东西一路70巷</div><div class="pill" style="left:746px;top:11px;width:46px">◦ Inctive</div></div>
<div class="row" style="left:252px;top:3342px;width:863px"><div class="t" style="left:37px;top:13px">這裡顯示Agent名稱這裡顯示Agent名稱（0）</div><div class="t" style="left:357px;top:13px">+886 935 120 080</div><div class="t" style="left:511px;top:13px">台灣台中市大安区东西一路70巷</div><div class="pill" style="left:746px;top:11px;width:46px">◦ Inctive</div></div>
<div class="row" style="left:252px;top:3383px;width:863px;border-radius:0 0 4px 4px"><div class="t" style="left:37px;top:13px">這裡顯示Agent名稱這裡顯示Agent名稱（0）</div><div class="t" style="left:357px;top:13px">+886 935 120 080</div><div class="t" style="left:511px;top:13px">台灣台中市大安区东西一路70巷</div><div class="pill" style="left:746px;top:11px;width:46px">◦ Inctive</div></div>
<div class="a" style="left:795px;top:3140px;width:224px;height:43px;background:#fffdf6;border-radius:4px;box-shadow:0 2px 6px rgba(0,0,0,.1);font-size:9px;color:#aaa;line-height:13px;padding:8px 0 0 12px;white-space:nowrap">台灣台中市大安区东西一路70巷如果很長的<br>情況可以hover展示全部信息</div>

<!-- ============ SECTION 5 ============ -->
<div class="sec" style="left:3px;top:3667px;width:1141px;height:836px"></div>
<div class="lbl" style="left:30px;top:3676px">agent-账号设置-intern 需任务引导的情况</div>
<div class="frame" style="left:30px;top:3697px;width:1108px;height:777px">
  <div class="hdr"><div class="logo"><span class="g">Gro</span><span class="f">ForU</span></div><div class="hi">你好, <b>GM633</b> ⌄</div></div>
  <div class="side">
    <div class="sname">GM633 MK Foodie Balakong</div><div class="sub">台灣</div>
    <div class="menu" style="top:59px"><svg width="11" height="13" viewBox="0 0 11 13"><circle cx="5.5" cy="4" r="3" fill="none" stroke="#666"/><path d="M1 12.5c0-3 2-4.5 4.5-4.5s4.5 1.5 4.5 4.5z" fill="none" stroke="#666"/></svg>Agent下線</div>
    <div class="menu" style="top:93px"><svg width="10" height="13" viewBox="0 0 10 13"><rect x=".5" y=".5" width="9" height="12" fill="none" stroke="#666"/><path d="M3 4h4M3 7h4" stroke="#666"/></svg>订单列表</div>
    <div class="menu on" style="top:127px"><svg width="12" height="12" viewBox="0 0 12 12"><circle cx="6" cy="6" r="4.5" fill="none" stroke="#fff" stroke-dasharray="2 1"/><circle cx="6" cy="6" r="1.8" fill="none" stroke="#fff"/></svg>帳號設置<span class="chev" style="color:#dfe">⌄</span></div>
  </div>
</div>
<div class="t" style="left:256px;top:3752px;font-size:15px;font-weight:bold;color:#333;line-height:20px">帳號設置</div>
<div class="card" style="left:256px;top:3790px;width:284px;height:376px">
  <div class="sec2l" style="left:25px;top:20px">系統完善任務清單</div><div class="line" style="left:122px;top:26px;width:140px"></div>
  <div class="a" style="left:25px;top:48px;width:1px;height:212px;background:#f0f0f0"></div>
  <div class="a" style="left:24px;top:47px;width:2px;height:18px;background:#5b9a2b"></div>
  <div class="t" style="left:44px;top:49px;font-weight:bold;color:#333">任務一</div>
  <div class="t" style="left:44px;top:70px;font-size:9.5px;color:#999">完成所有基本資料填寫並保存（本頁右側）</div>
  <div class="a" style="left:24px;top:108px;width:2px;height:18px;background:#5b9a2b"></div>
  <div class="t" style="left:44px;top:110px;font-weight:bold;color:#333">任務二</div>
  <div class="t" style="left:44px;top:131px;font-size:9.5px;color:#999;line-height:15px">以個人手機號於 <span style="color:#3b7ddd;text-decoration:underline">e-shop</span> 下單（線下檢查，<br>系統中展示且可管理員手動確認）</div>
  <div class="a" style="left:24px;top:184px;width:2px;height:18px;background:#5b9a2b"></div>
  <div class="t" style="left:44px;top:186px;font-weight:bold;color:#333">任務三</div>
  <div class="t" style="left:44px;top:207px;font-size:9.5px;color:#999;line-height:15px">建立客戶 whatsapp 群組（線下檢查，系統<br>中展示且可管理員手動確認）</div>
  <div class="t" style="left:25px;top:280px;font-size:8.5px;color:#ccc;line-height:12px">* 確認完成上述三項任務後，可點擊下方提交按鈕並<br>等下通知管理員進行確認。</div>
  <div class="gbtn" style="left:25px;top:321px;width:67px;height:31px;line-height:31px">提交申請</div>
</div>
<div class="card" style="left:558px;top:3790px;width:562px;height:588px">
  <div class="sec2l" style="left:25px;top:20px">基本資料</div><div class="line" style="left:82px;top:26px;width:455px"></div>
  <div class="fl" style="left:25px;top:49px">賬戶名：</div><div class="fv" style="left:124px;top:49px">GM633 MK Foodie Balakong</div>
  <div class="fl" style="left:25px;top:77px">密碼：</div><div class="fv" style="left:124px;top:77px">******</div>
  <div class="fl" style="left:25px;top:104px">Email：</div><div class="fv" style="left:124px;top:104px">email@shopline.com</div>
  <div class="sec2l" style="left:25px;top:137px">工作信息</div><div class="line" style="left:82px;top:143px;width:480px"></div>
  <div class="fl" style="left:25px;top:168px">Type</div><div class="fl" style="left:275px;top:168px">Parent</div>
  <div class="fi d" style="left:25px;top:189px;width:231px">Formal<span class="c">⌄</span></div>
  <div class="fi d" style="left:275px;top:189px;width:230px">GM633 MK Foodie Balakong<span class="c">⌄</span></div>
  <div class="fl" style="left:25px;top:234px;font-weight:bold;color:#333">地址</div>
  <div class="fi" style="left:25px;top:255px;width:231px">台灣<span class="c">⌄</span></div>
  <div class="fi" style="left:275px;top:255px;width:230px">臺中市<span class="c">⌄</span></div>
  <div class="fi" style="left:25px;top:288px;width:231px">大安區<span class="c">⌄</span></div>
  <div class="fi" style="left:275px;top:288px;width:230px">東西一路70巷</div>
  <div class="fl" style="left:25px;top:334px;font-weight:bold;color:#333">電話號碼</div>
  <div class="fl" style="left:275px;top:334px;font-weight:bold;color:#333">工作時間設定 <span style="font-weight:normal;font-size:8px;color:#aaa">（完成初始設定後修改需通過管理員操作）</span></div>
  <div class="fi" style="left:25px;top:355px;width:231px;border-color:#f2a6a0">123</div>
  <div class="fi" style="left:275px;top:355px;width:230px;color:#bbb">請選擇工作天數<span class="c">⌄</span></div>
  <div class="fl red" style="left:25px;top:385px;font-size:9.5px">這是一條錯誤提示</div>
  <div class="fl" style="left:25px;top:401px;font-weight:bold;color:#333">狀態設定 <span style="font-weight:normal;font-size:8px;color:#aaa">（假日模式必須於 48 小時前完成設定）</span></div>
  <div class="fi" style="left:25px;top:422px;width:231px">On holiday<span class="c">⌄</span></div>
  <div class="fi" style="left:275px;top:422px;width:230px;color:#bbb">起始日期<span style="position:absolute;left:95px;color:#555">➜</span><span style="position:absolute;left:115px">截止日期</span><span style="position:absolute;right:0;top:0;width:27px;height:25px;border-left:1px solid #e3e5e8;text-align:center;color:#888">▯</span></div>
  <div class="fl" style="left:25px;top:468px">Create date</div><div class="fl" style="left:275px;top:468px">On-board date</div>
  <div class="fi d" style="left:25px;top:489px;width:231px">2021-08-21</div>
  <div class="fi d" style="left:275px;top:489px;width:230px">2021-11-21</div>
  <div class="btn" style="left:25px;top:534px;width:45px;height:30px;line-height:30px;border:1px solid #eee">取消</div>
  <div class="gbtn" style="left:83px;top:534px;width:46px;height:30px;line-height:30px">保存</div>
</div>
</body></html>
